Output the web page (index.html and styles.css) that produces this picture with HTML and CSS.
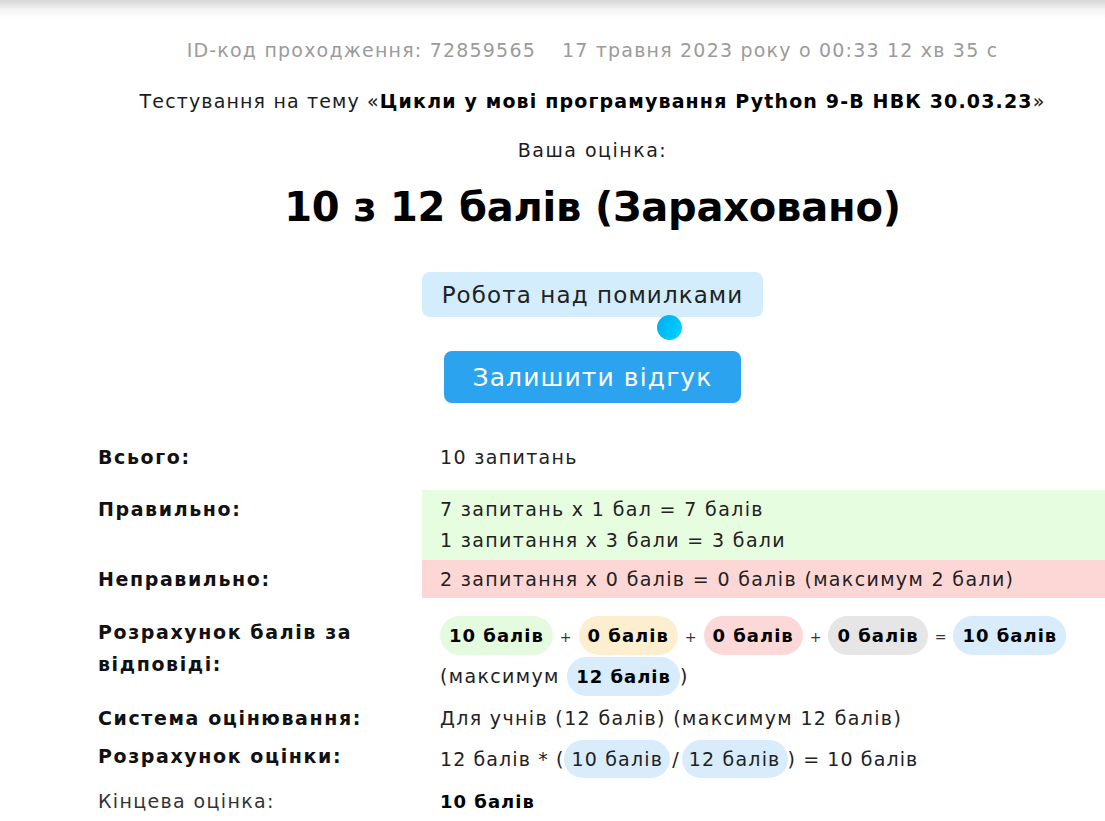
FILE: index.html
```html
<!DOCTYPE html>
<html lang="uk">
<head>
<meta charset="utf-8">
<title>Результат тестування</title>
<link rel="stylesheet" href="styles.css">
</head>
<body>
<div class="shadow"></div>
<main class="result">
  <p class="meta">ID-код проходження: 72859565<span class="date">17 травня 2023 року о 00:33 12 хв 35 с</span></p>
  <p class="topic">Тестування на тему «<b>Цикли у мові програмування Python 9-В НВК 30.03.23</b>»</p>
  <p class="your">Ваша оцінка:</p>
  <h1 class="score">10 з 12 балів (Зараховано)</h1>
  <div class="actions">
    <button class="btn-light">Робота над помилками</button>
    <span class="dot"></span>
    <button class="btn-blue">Залишити відгук</button>
  </div>
  <div class="table">
    <div class="row r-total">
      <div class="label">Всього:</div>
      <div class="value">10 запитань</div>
    </div>
    <div class="row r-correct">
      <div class="label">Правильно:</div>
      <div class="value green">
        <div>7 запитань x 1 бал = 7 балів</div>
        <div>1 запитання x 3 бали = 3 бали</div>
      </div>
    </div>
    <div class="row r-wrong">
      <div class="label">Неправильно:</div>
      <div class="value red">2 запитання x 0 балів = 0 балів (максимум 2 бали)</div>
    </div>
    <div class="row r-calc">
      <div class="label">Розрахунок балів за відповіді:</div>
      <div class="value pills"><span class="pill p-green">10 балів</span><span class="op">+</span><span class="pill p-orange">0 балів</span><span class="op">+</span><span class="pill p-red">0 балів</span><span class="op">+</span><span class="pill p-grey">0 балів</span><span class="op eq">=</span><span class="pill p-blue">10 балів</span><br>(максимум <span class="pill p-blue">12 балів</span>)</div>
    </div>
    <div class="row r-system">
      <div class="label">Система оцінювання:</div>
      <div class="value">Для учнів (12 балів) (максимум 12 балів)</div>
    </div>
    <div class="row r-grade">
      <div class="label">Розрахунок оцінки:</div>
      <div class="value">12 балів * (<span class="pill thin p-blue">10 балів</span><span class="slash">/</span><span class="pill thin p-blue">12 балів</span>) = 10 балів</div>
    </div>
    <div class="row r-final">
      <div class="label plain">Кінцева оцінка:</div>
      <div class="value"><b>10 балів</b></div>
    </div>
  </div>
</main>
</body>
</html>
```
FILE: styles.css
```css
* { box-sizing: border-box; }
html, body { margin: 0; padding: 0; background: #fff; }
body {
  font-family: "DejaVu Sans", "Noto Sans", sans-serif;
  color: #1c1c1c;
  overflow: hidden;
}
.shadow {
  height: 18px;
  background: linear-gradient(#d6d6d6, #f4f4f4 55%, #ffffff);
}
.result {
  margin-left: 80px;
  width: 1025px;
  text-align: center;
}
p { margin: 0; }
.meta {
  margin-top: 20px;
  line-height: 24px;
  font-size: 19px;
  letter-spacing: 1.2px;
  color: #9b9b9b;
}
.meta .date { margin-left: 26px; }
.topic {
  margin-top: 27px;
  line-height: 24px;
  font-size: 19px;
  letter-spacing: 1.15px;
  color: #1c1c1c;
}
.topic b { color: #000; }
.your {
  margin-top: 25px;
  line-height: 24px;
  font-size: 19px;
  letter-spacing: 1.5px;
}
.score {
  margin: 17px 0 0;
  line-height: 56px;
  font-size: 40px;
  letter-spacing: -0.2px;
  font-weight: bold;
  color: #000;
}
.actions {
  position: relative;
  margin-top: 37px;
}
.actions button {
  display: block;
  margin: 0 auto;
  border: none;
  font-family: inherit;
  cursor: pointer;
}
.btn-light {
  height: 45px;
  padding: 0 20px;
  border-radius: 8px;
  background: #d3edfc;
  color: #222;
  font-size: 23px;
  letter-spacing: 1.1px;
}
.btn-blue {
  margin-top: 34px !important;
  height: 52px;
  padding: 0 29px;
  border-radius: 8px;
  background: #2ba3ee;
  color: #fff;
  font-size: 25px;
  letter-spacing: 1.1px;
}
.dot {
  position: absolute;
  left: 577px;
  top: 43px;
  width: 25px;
  height: 25px;
  border-radius: 50%;
  background: linear-gradient(120deg, #00aaf2, #00d6ff);
}
.table {
  margin-top: 35px;
  text-align: left;
  font-size: 19px;
  letter-spacing: 1.35px;
}
.row {
  display: grid;
  grid-template-columns: 342px 1fr;
  align-items: start;
}
.label {
  padding: 4px 18px 3px;
  line-height: 31px;
  font-weight: bold;
  letter-spacing: 1.6px;
  color: #111;
}
.label.plain { font-weight: normal; letter-spacing: 1.35px; color: #333; }
.value {
  padding: 4px 18px 3px 18px;
  line-height: 31px;
  color: #222;
}
.value b { color: #000; font-size: 18px; letter-spacing: 1px; }
.r-total { margin-bottom: 14px; }
.green { background: #e6fde0; padding-bottom: 4px; }
.red { background: #fdd7d6; }
.r-correct { align-items: stretch; }
.r-wrong { align-items: stretch; }
.r-calc { margin-top: 14px; }
.r-calc .label { line-height: 32px; }
.pills { line-height: 39px; padding-bottom: 3px; }
.pill {
  display: inline-block;
  vertical-align: top;
  padding: 0 9px;
  border-radius: 20px;
  line-height: 39px;
  font-size: 18px;
  letter-spacing: 1px;
  font-weight: bold;
  color: #000;
}
.pill.thin {
  font-size: 19px;
  letter-spacing: 1.2px;
  padding: 0 7px;
  font-weight: normal;
  color: #222;
  line-height: 38px;
}
.slash { margin: 0 2px; }
.op { margin: 0 7px; font-size: 14px; letter-spacing: 0; color: #333; }
.p-green { background: #e5fbe0; }
.p-orange { background: #fdeecf; }
.p-red { background: #fdd8d8; }
.p-grey { background: #e6e6e6; }
.p-blue { background: #d8ecfb; }
.r-system .label, .r-system .value { padding-top: 3px; line-height: 32px; }
.r-grade .label { padding-top: 3px; line-height: 32px; }
.r-grade .value { padding-top: 3px; line-height: 38px; letter-spacing: 1.1px; }
.r-final .label, .r-final .value { line-height: 32px; }
```
